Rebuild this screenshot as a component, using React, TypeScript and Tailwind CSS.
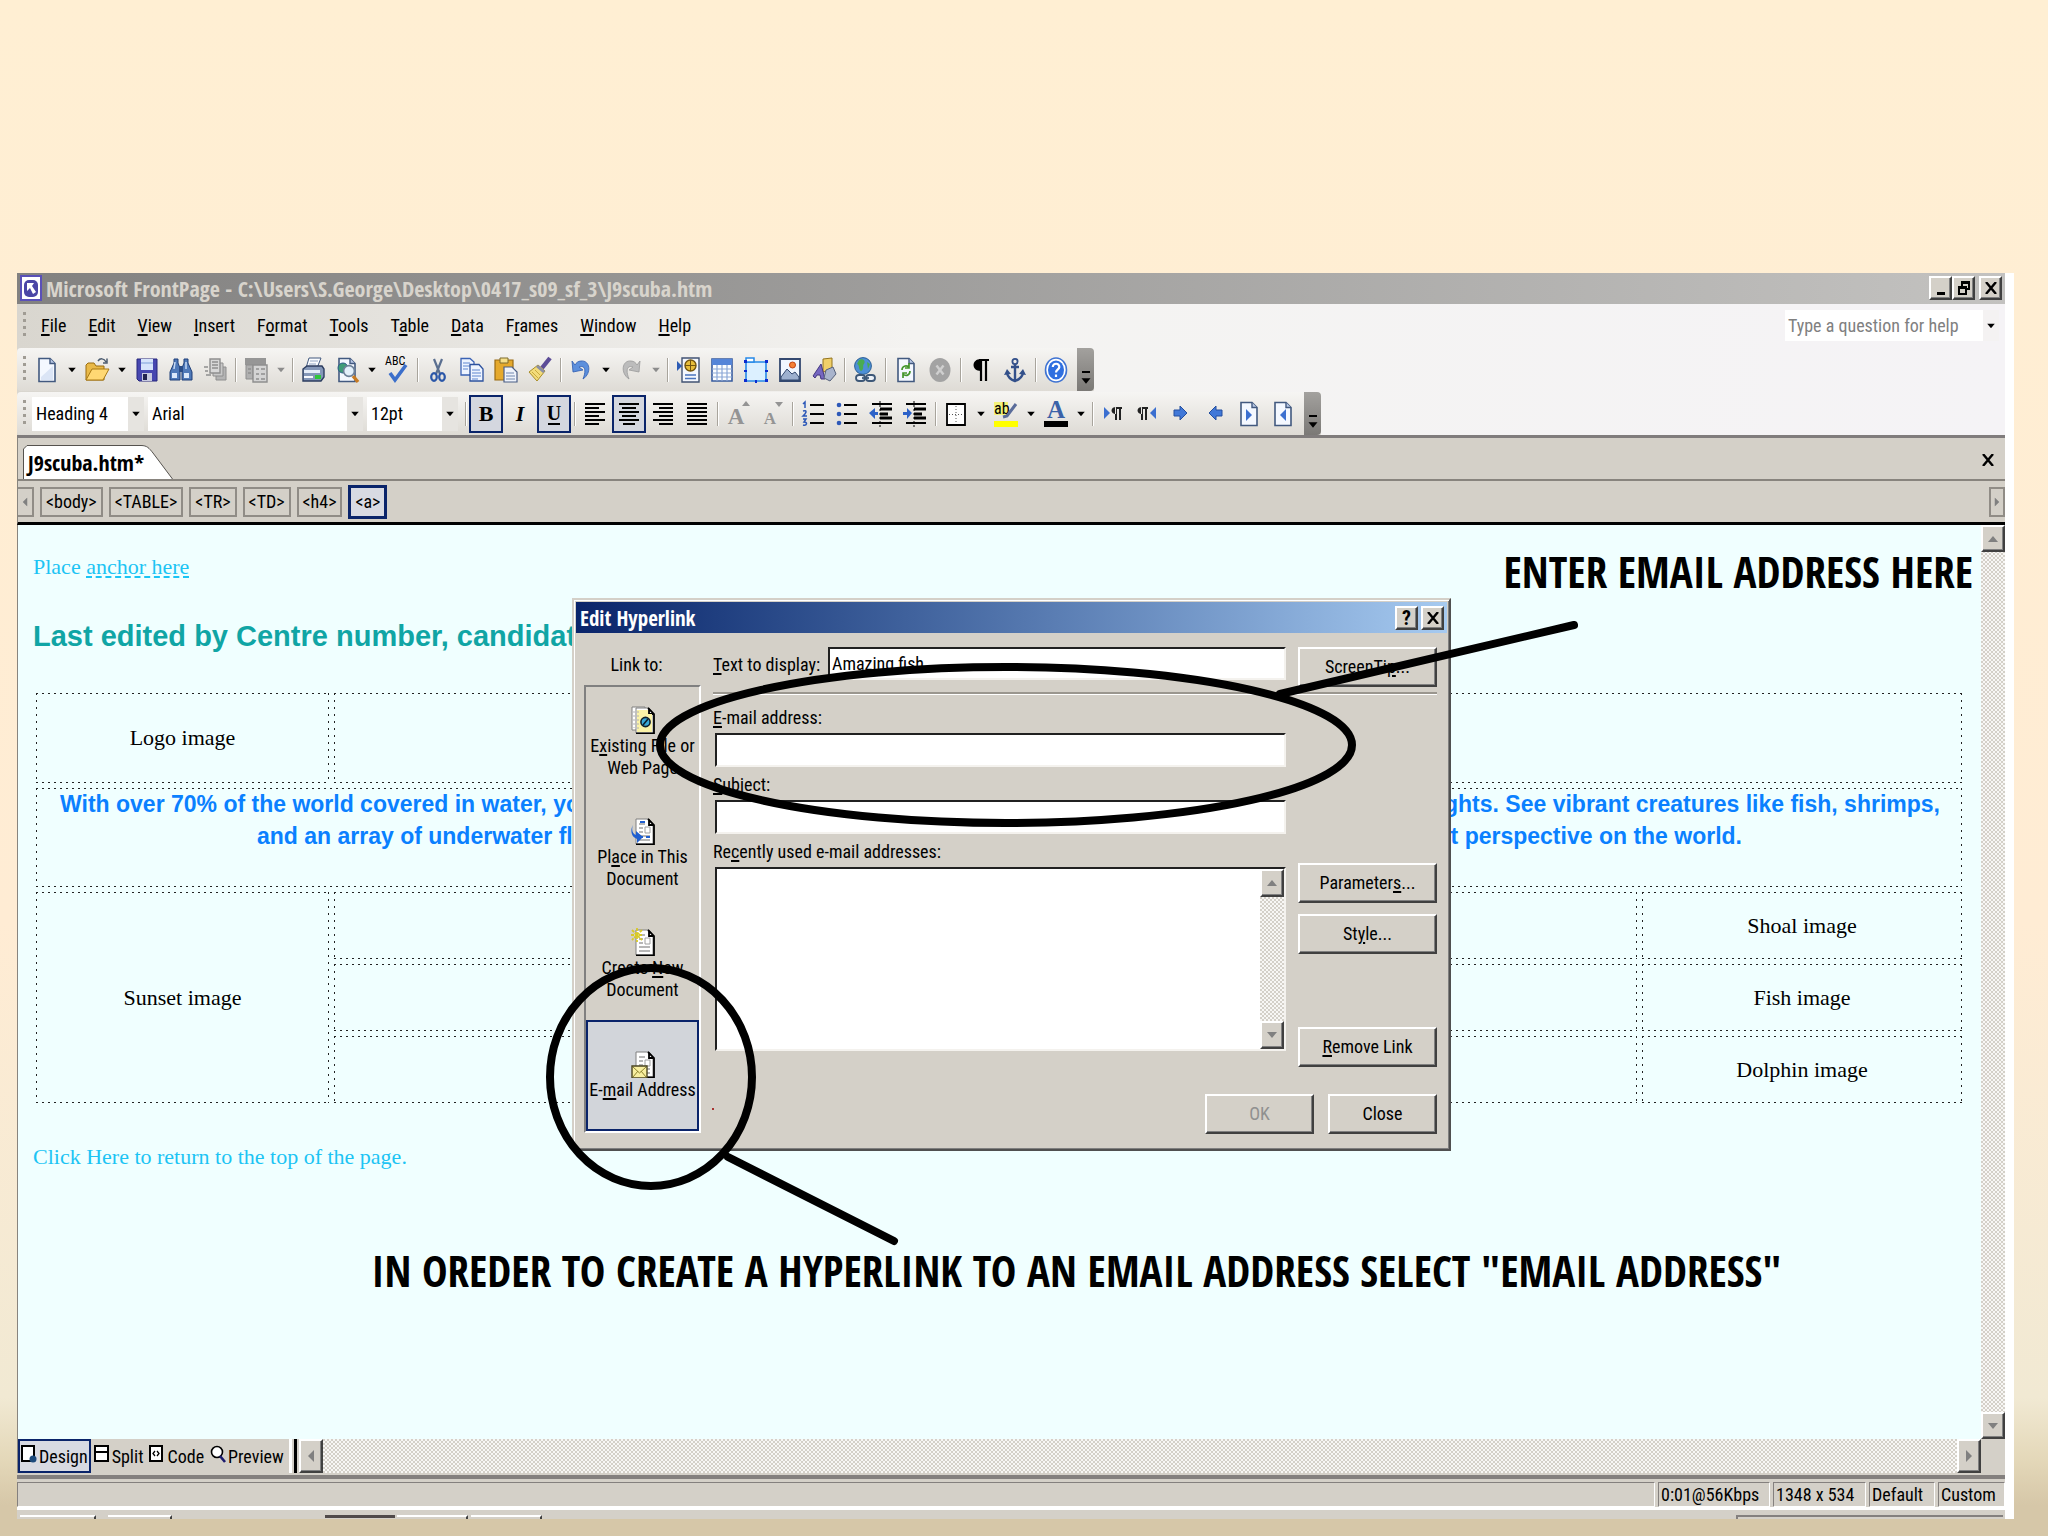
import { useState } from "react";
import type { ReactNode } from "react";

const raised =
  "border-2 border-t-white border-l-white border-r-[#404040] border-b-[#404040] bg-[#d4d0c8] shadow-[inset_-1px_-1px_0_#808080]";
const sunken =
  "border-2 border-t-[#202020] border-l-[#202020] border-r-[#f4f2ee] border-b-[#f4f2ee] bg-white";
const hatch =
  "bg-[repeating-conic-gradient(#f8f7f5_0_25%,#d4d0c8_0_50%)] bg-[length:4px_4px]";
const boldFont = "font-['Open_Sans_Condensed','Open_Sans',sans-serif] font-bold";
const cell =
  "[background:linear-gradient(90deg,#222_2px,transparent_2px)_0_0/6px_1px_repeat-x,linear-gradient(90deg,#222_2px,transparent_2px)_0_100%/6px_1px_repeat-x,linear-gradient(#222_2px,transparent_2px)_0_0/1px_7px_repeat-y,linear-gradient(#222_2px,transparent_2px)_100%_0/1px_7px_repeat-y]";

// "&File" -> underlined F
function Mnemonic({ text }: { text: string }) {
  const i = text.indexOf("&");
  if (i < 0) return <>{text}</>;
  return (
    <>
      {text.slice(0, i)}
      <u className="decoration-2 underline-offset-2">{text[i + 1]}</u>
      {text.slice(i + 2)}
    </>
  );
}

function Glyph({ children }: { children: ReactNode }) {
  return (
    <svg viewBox="0 0 24 26" className="h-[26px] w-6 overflow-visible" aria-hidden="true">
      {children}
    </svg>
  );
}

function Tri({ dir, className = "fill-[#808080]" }: { dir: "up" | "down" | "left" | "right"; className?: string }) {
  const d = {
    up: "M1 9 L6 3 L11 9 Z",
    down: "M1 3 L11 3 L6 9 Z",
    left: "M9 0 L3 6 L9 12 Z",
    right: "M3 0 L9 6 L3 12 Z",
  }[dir];
  return (
    <svg viewBox="0 0 12 12" className={`h-3 w-3 ${className}`} aria-hidden="true">
      <path d={d} />
    </svg>
  );
}

const page = (
  <>
    <path d="M4 1.5H15L20 6.5V24.5H4Z" fill="#f4f8ff" stroke="#42597f" strokeWidth="1.6" />
    <path d="M15 1.5V6.5H20" fill="#b9c9e6" stroke="#42597f" strokeWidth="1.4" />
  </>
);

const icons: Record<string, ReactNode> = {
  "New page": (
    <>
      {page}
      <path d="M6 20L18 9V23H6Z" fill="#dbe5f6" />
    </>
  ),
  Open: (
    <>
      <path d="M1 8V23H19V9H11L9 6H3Z" fill="#e9b948" stroke="#9a6d10" />
      <path d="M1 23L7 12H24L18 23Z" fill="#ffd873" stroke="#a87914" />
      <path d="M13 4C15 1 19 1 21 5M22 1.5V6H18" fill="none" stroke="#4c5c70" strokeWidth="1.5" />
    </>
  ),
  Save: (
    <>
      <path d="M2 2H22V24H4L2 22Z" fill="#4747b0" stroke="#26267c" />
      <path d="M6 2H18V13H6Z" fill="#d6e4fb" />
      <path d="M6 5H18V7H6Z" fill="#a9c2ea" />
      <path d="M7 16H17V24H7Z" fill="#c9cbe0" />
      <path d="M8 17H12V23H8Z" fill="#23234f" />
    </>
  ),
  Find: (
    <>
      <path d="M5 2H9V6L11 11V23H1V15L5 6Z" fill="#4f79b8" stroke="#1f3f78" />
      <path d="M15 2H19V6L23 15V23H13V11L15 6Z" fill="#4f79b8" stroke="#1f3f78" />
      <path d="M10 9H14V15H10Z" fill="#2b4d87" />
      <path d="M3 16H8V21H3ZM15 16H20V21H15Z" fill="#dbe8fa" />
      <path d="M6 5L5 12M17 5L17 12" stroke="#c5d9f5" strokeWidth="1.5" />
    </>
  ),
  Publish: (
    <>
      <path d="M13 10H23V23H13Z" fill="#b4b4b4" stroke="#8e8e8e" />
      <path d="M10 6H20V19H10Z" fill="#c8c8c8" stroke="#8e8e8e" />
      <path d="M7 2H17V16H7Z" fill="#d8d8d8" stroke="#8e8e8e" strokeWidth="1.4" />
      <path d="M9 5H15M9 8H15M9 11H15M1 10H5M2 14H5M3 18H8" stroke="#8e8e8e" strokeWidth="1.4" />
    </>
  ),
  Pane: (
    <>
      <path d="M1 1H22V8H1Z" fill="#969696" />
      <path d="M2 8H9V22H2Z" fill="#b0b0b0" stroke="#8e8e8e" />
      <path d="M9 8H23V25H9Z" fill="#d4d4d4" stroke="#8e8e8e" strokeWidth="1.4" />
      <path d="M12 12H15M17 12H21M12 17H15M17 17H21M12 22H15M17 22H21M4 12H7M4 16H7" stroke="#8e8e8e" strokeWidth="1.5" />
    </>
  ),
  Print: (
    <>
      <path d="M8 1H20L16 11H5Z" fill="#fafcff" stroke="#42597f" />
      <path d="M9 4H17M8 7H15" stroke="#93a6c4" />
      <path d="M2 12L6 9H21L23 12V20L20 24H2Z" fill="#8497b8" stroke="#2c3d5f" strokeWidth="1.4" />
      <path d="M3 13H19V16H3Z" fill="#e6edf8" />
      <path d="M3 19H12V21H3Z" fill="#f7f9fd" />
      <path d="M14 18H20V22H14Z" fill="#2fc63a" />
    </>
  ),
  Preview: (
    <>
      {page}
      <circle cx="8" cy="11" r="5" fill="#3f9c78" stroke="#2a5b86" />
      <circle cx="14" cy="14" r="5.4" fill="#e3f0fb" stroke="#6d8098" strokeWidth="1.6" />
      <path d="M18 19L23 25" stroke="#c77a22" strokeWidth="3.4" />
    </>
  ),
  Spelling: (
    <>
      <text x="0" y="8" fontSize="12" className="font-['Roboto_Condensed',sans-serif]">ABC</text>
      <path d="M5 16L10 23L21 8" fill="none" stroke="#3c6fcb" strokeWidth="3.6" />
    </>
  ),
  Cut: (
    <>
      <path d="M8 2L14 17M16 2L10 17" stroke="#5a6f90" strokeWidth="2.2" />
      <ellipse cx="8" cy="20" rx="2.8" ry="3.8" fill="none" stroke="#2b57a8" strokeWidth="2.2" />
      <ellipse cx="16" cy="20" rx="2.8" ry="3.8" fill="none" stroke="#2b57a8" strokeWidth="2.2" />
    </>
  ),
  Copy: (
    <>
      <path d="M1 1.5H10L14 5V18H1Z" fill="#eef4ff" stroke="#3a62b4" strokeWidth="1.3" />
      <path d="M3 6H10M3 9H10M3 12H8" stroke="#5f86d0" />
      <path d="M10 7.5H19L23 12V24H10Z" fill="#eef4ff" stroke="#2c519e" strokeWidth="1.3" />
      <path d="M12 13H20M12 16H21M12 19H21M12 22H18" stroke="#5f86d0" strokeWidth="1.2" />
    </>
  ),
  Paste: (
    <>
      <path d="M1 3H19V23H1Z" fill="#e5a92c" stroke="#9a6b12" strokeWidth="1.2" />
      <path d="M6 1H14V6H6Z" fill="#f6e08b" stroke="#7c6a2c" />
      <path d="M10 10H18L23 15V25H10Z" fill="#eff3fb" stroke="#4b5e86" strokeWidth="1.2" />
      <path d="M12 16H20M12 19H21M12 22H21" stroke="#7087ae" />
    </>
  ),
  "Format painter": (
    <>
      <path d="M22 1L14 11" stroke="#5c4c97" strokeWidth="4.4" />
      <path d="M10 8L17 14L9 24L1 15Z" fill="#f3dc7b" stroke="#a98d28" />
      <path d="M10 8L17 14L15 16L8 10Z" fill="#8a8fa6" />
      <path d="M4 15L10 21M7 13L12 18" stroke="#c9ab3e" />
    </>
  ),
  Undo: <path d="M3 4L4 15L14 13L10 10C15 8 18 12 14 22C23 16 21 3 12 4C9 4 7 6 6 8Z" fill="#5c8fdc" stroke="#2f5cb0" strokeWidth="0.8" />,
  Redo: <path d="M21 4L20 15L10 13L14 10C9 8 6 12 10 22C1 16 3 3 12 4C15 4 17 6 18 8Z" fill="#bcbcbc" stroke="#9a9a9a" strokeWidth="0.8" />,
  "Web component": (
    <>
      <path d="M1 4L6 9L1 14Z" fill="#2d5cb5" />
      <path d="M6 1H23V25H6Z" fill="#f4f7fd" stroke="#415373" strokeWidth="1.4" />
      <circle cx="14.5" cy="8.5" r="5.5" fill="#e7bd3a" stroke="#73550d" strokeWidth="1.4" />
      <path d="M14.5 3V14M9 8.5H20" stroke="#73550d" />
      <path d="M9 18H20M9 21.5H20" stroke="#4a74bd" strokeWidth="1.6" />
    </>
  ),
  "Insert table": (
    <>
      <path d="M2 2H22V24H2Z" fill="#fdfeff" stroke="#395c9f" strokeWidth="1.6" />
      <path d="M2 2H22V8H2Z" fill="#5585d8" />
      <path d="M2 12H22M2 16H22M2 20H22M7 8V24M12 8V24M17 8V24" stroke="#8ba7d6" strokeWidth="1.2" />
    </>
  ),
  Layer: (
    <>
      <path d="M2 5H22V24H2Z" fill="#dcf0ff" stroke="#2689e8" strokeWidth="1.6" />
      <path d="M2 1H10V5H2Z" fill="#fff" stroke="#2689e8" strokeWidth="1.5" />
      <path d="M0 3H3V6H0ZM21 3H24V6H21ZM0 22H3V25H0ZM21 22H24V25H21ZM11 23H13V26H11ZM0 13H3V15H0ZM21 13H24V15H21Z" fill="#0c2bd0" />
    </>
  ),
  Picture: (
    <>
      <path d="M2 2H22V24H2Z" fill="#f0f6ff" stroke="#33486f" strokeWidth="1.8" />
      <circle cx="14.5" cy="8" r="3" fill="#f58035" stroke="#c04212" />
      <path d="M3 20L9 12L14 17L17 15L21 20V23H3Z" fill="#9db0cf" stroke="#33486f" />
    </>
  ),
  Drawing: (
    <>
      <path d="M11 2L20 1V13L11 15Z" fill="#f0cf69" stroke="#94741c" />
      <path d="M1 19L9 7L13 22H9L8 18H5L3 21Z" fill="#7566c0" stroke="#43377f" />
      <path d="M14 13L21 10L24 17L18 24L12 21Z" fill="#a9b4cc" stroke="#56617b" />
    </>
  ),
  Hyperlink: (
    <>
      <circle cx="10" cy="9" r="8.4" fill="#4d8fd6" stroke="#2c5f94" />
      <path d="M6 3C10 1 13 4 11 7C9 8 12 12 8 14C5 12 7 8 4 7ZM14 5L17 7L15 12Z" fill="#49ab50" />
      <rect x="3" y="18" width="9" height="6" rx="3" fill="#eef2f8" stroke="#3e5878" strokeWidth="1.8" />
      <rect x="13" y="18" width="9" height="6" rx="3" fill="#eef2f8" stroke="#3e5878" strokeWidth="1.8" />
      <path d="M9 21H16" stroke="#3e5878" strokeWidth="1.8" />
    </>
  ),
  Refresh: (
    <>
      {page}
      <path d="M8 13C8 9 12 8 15 10M15 6V11H11M16 14C16 18 12 20 9 17M9 21V16H13" fill="none" stroke="#44962d" strokeWidth="1.7" />
    </>
  ),
  Stop: (
    <>
      <ellipse cx="12" cy="13" rx="10.5" ry="12" fill="#a3a3a3" />
      <path d="M8.5 8.5L15.5 17.5M15.5 8.5L8.5 17.5" stroke="#cfcfcf" strokeWidth="2.4" />
    </>
  ),
  "Show all": (
    <>
      <path d="M12 2C2 2 2 14 12 14Z" />
      <path d="M12 2V24M17 2V24M10 3H20" stroke="#000" strokeWidth="2.2" />
    </>
  ),
  Bookmark: (
    <>
      <circle cx="12" cy="4.5" r="2.6" fill="none" stroke="#33508a" strokeWidth="1.8" />
      <path d="M12 7V23M8 10H16M4 16C5 21 9 23 12 24C15 23 19 21 20 16" fill="none" stroke="#33508a" strokeWidth="2.4" />
      <path d="M1 18L4 12L8 17ZM23 18L20 12L16 17Z" fill="#33508a" />
    </>
  ),
  Help: (
    <>
      <ellipse cx="12" cy="13" rx="10.5" ry="12" fill="#fff" stroke="#3f73d2" strokeWidth="1.6" />
      <ellipse cx="12" cy="13" rx="8" ry="9.5" fill="#2f6fe0" />
      <path d="M8.8 10C8.8 5.500 15.5 5.800 15.3 10C15 12.6 12 12.8 12 15.5M12 17.5V20" fill="none" stroke="#fff" strokeWidth="2.2" />
    </>
  ),
  Bold: <text x="12" y="20" textAnchor="middle" fontSize="22" className="font-['Liberation_Serif',serif] font-bold">B</text>,
  Italic: <text x="12" y="20" textAnchor="middle" fontSize="22" className="font-['Liberation_Serif',serif] font-bold italic">I</text>,
  Underline: (
    <>
      <text x="12" y="19" textAnchor="middle" fontSize="20" className="font-['Liberation_Serif',serif] font-bold">U</text>
      <path d="M6 23H18" stroke="#000" strokeWidth="2" />
    </>
  ),
  "Align left": <path d="M2 3H22M2 7H16M2 11H22M2 15H16M2 19H22M2 23H16" stroke="#000" strokeWidth="2" />,
  Center: <path d="M2 3H22M5 7H19M2 11H22M5 15H19M2 19H22M6 23H18" stroke="#000" strokeWidth="2" />,
  "Align right": <path d="M2 3H22M8 7H22M2 11H22M8 15H22M2 19H22M8 23H22" stroke="#000" strokeWidth="2" />,
  Justify: <path d="M2 3H22M2 7H22M2 11H22M2 15H22M2 19H22M2 23H22" stroke="#000" strokeWidth="2" />,
  "Grow font": (
    <>
      <text x="10" y="23" textAnchor="middle" fontSize="23" fill="#949494" className="font-['Liberation_Serif',serif] font-bold">A</text>
      <path d="M16 5L20 0L24 5Z" fill="#949494" />
    </>
  ),
  "Shrink font": (
    <>
      <text x="10" y="23" textAnchor="middle" fontSize="17" fill="#949494" className="font-['Liberation_Serif',serif] font-bold">A</text>
      <path d="M15 1H23L19 6Z" fill="#949494" />
    </>
  ),
  Numbering: (
    <>
      <path d="M9 4H23M9 13H23M9 22H23" stroke="#000" strokeWidth="1.8" />
      <path d="M2 3L4 1V7M2 10C6 9 6 11 2 15H6M2 18H5L3 21C7 21 6 25 2 24" fill="none" stroke="#2d58b8" strokeWidth="1.5" />
    </>
  ),
  Bullets: (
    <>
      <path d="M9 4H22M9 13H22M9 22H22" stroke="#000" strokeWidth="1.8" />
      <circle cx="4" cy="4" r="2.3" fill="#2d58b8" />
      <circle cx="4" cy="13" r="2.3" fill="#2d58b8" />
      <circle cx="4" cy="22" r="2.3" fill="#2d58b8" />
    </>
  ),
  Outdent: (
    <>
      <path d="M3 3H23M3 22H23" stroke="#000" strokeWidth="1.8" />
      <path d="M11 8H23M11 13H19M11 17H23" stroke="#000" strokeWidth="3" />
      <path d="M11 0V26" stroke="#000" strokeDasharray="2 2" />
      <path d="M0 12L6 7V11H9V14H6V18Z" fill="#2d62c8" />
    </>
  ),
  Indent: (
    <>
      <path d="M3 3H23M3 22H23" stroke="#000" strokeWidth="1.8" />
      <path d="M11 8H23M11 13H19M11 17H23" stroke="#000" strokeWidth="3" />
      <path d="M11 0V26" stroke="#000" strokeDasharray="2 2" />
      <path d="M9 12L4 7V11H0V14H4V18Z" fill="#2d62c8" />
    </>
  ),
  Borders: (
    <>
      <path d="M3 3H21V24H3Z" fill="#fff" stroke="#000" strokeWidth="1.8" />
      <path d="M12 5V23M5 13.5H20" stroke="#555" strokeDasharray="1 2" />
    </>
  ),
  Highlight: (
    <>
      <path d="M0 1H14V14H0Z" fill="#f4f27a" />
      <text x="0" y="13" fontSize="16" className="font-['Roboto_Condensed',sans-serif]">ab</text>
      <path d="M22 3L13 15L9 16" fill="none" stroke="#5a6c9a" strokeWidth="3" />
      <path d="M0 20H24V26H0Z" fill="#ff0" />
    </>
  ),
  "Font color": (
    <>
      <text x="12" y="17" textAnchor="middle" fontSize="25" fill="#3b62a8" className="font-['Liberation_Serif',serif] font-bold">A</text>
      <path d="M0 20H24V26H0Z" />
    </>
  ),
  "Left to right": (
    <>
      <path d="M3 6L9 12L3 18Z" fill="#3b6fd0" />
      <path d="M15 6C9 6 9 13 15 13ZM14 6H21V8H20V19H18V8H16V19H14Z" fill="#222" />
    </>
  ),
  "Right to left": (
    <>
      <path d="M21 6L15 12L21 18Z" fill="#3b6fd0" />
      <path d="M7 6C1 6 1 13 7 13ZM6 6H13V8H12V19H10V8H8V19H6Z" fill="#222" />
    </>
  ),
  Forward: <path d="M5 9H11V5L18 12L11 19V15H5Z" fill="#4178d8" stroke="#244f9f" />,
  Back: <path d="M19 9H13V5L6 12L13 19V15H19Z" fill="#4178d8" stroke="#244f9f" />,
  "Next page": (
    <>
      {page}
      <path d="M9 8L15 14L9 20Z" fill="#3b6fd0" />
    </>
  ),
  "Previous page": (
    <>
      {page}
      <path d="M15 8L9 14L15 20Z" fill="#3b6fd0" />
    </>
  ),
};

// "|" is a separator, "v" a drop-down arrow, "-" a disabled arrow
const standardBar = [
  "New page", "v", "Open", "v", "Save", "Find", "Publish", "|", "Pane", "-", "|", "Print", "Preview", "v",
  "Spelling", "|", "Cut", "Copy", "Paste", "Format painter", "|", "Undo", "v", "Redo", "-", "|",
  "Web component", "Insert table", "Layer", "Picture", "Drawing", "|", "Hyperlink", "|", "Refresh", "Stop",
  "|", "Show all", "Bookmark", "|", "Help",
];

const formatBar = [
  "|", "Bold", "Italic", "Underline", "|", "Align left", "Center", "Align right", "Justify", "|",
  "Grow font", "Shrink font", "|", "Numbering", "Bullets", "Outdent", "Indent", "|", "Borders", "v",
  "Highlight", "v", "Font color", "v", "|", "Left to right", "Right to left", "Forward", "Back",
  "Next page", "Previous page",
];

const pressed = ["Bold", "Underline", "Center"];

function Tools({ items }: { items: string[] }) {
  return (
    <>
      {items.map((name, i) => {
        if (name === "|") {
          return <span key={i} className="mr-[2px] ml-[3px] h-6 w-[2px] border-l border-r border-l-[#a8a49c] border-r-white" />;
        }
        if (name === "v" || name === "-") {
          return (
            <button key={i} aria-label="More options" className="flex w-4 justify-center">
              <Tri dir="down" className={name === "v" ? "fill-black scale-75" : "fill-[#8c8c8c] scale-75"} />
            </button>
          );
        }
        return (
          <button
            key={i}
            aria-label={name}
            className={`flex h-[38px] w-[34px] items-center justify-center ${
              pressed.includes(name) ? "border-2 border-[#0a246a] bg-[#d4d7df]" : ""
            }`}
          >
            <Glyph>{icons[name]}</Glyph>
          </button>
        );
      })}
    </>
  );
}

function Grip() {
  return <span className="mx-1 h-7 w-[3px] bg-[linear-gradient(#a09c94_3px,transparent_3px)] bg-[length:3px_7px]" />;
}

function Overflow() {
  return (
    <button aria-label="Toolbar options" className="ml-1 flex w-[17px] flex-col items-center justify-end gap-[2px] self-stretch rounded-r bg-gradient-to-b from-[#a3a19e] to-[#7b7976] pb-1">
      <span className="h-[2px] w-2 bg-black" />
      <Tri dir="down" className="fill-black scale-90" />
    </button>
  );
}

function Combo({ label, value, className }: { label: string; value: string; className: string }) {
  return (
    <span className={`relative mr-1 flex h-[34px] items-center bg-white ${className}`}>
      <select aria-label={label} className="h-full w-full appearance-none bg-transparent pl-1 outline-none">
        <option>{value}</option>
      </select>
      <span className="pointer-events-none absolute inset-y-0 right-0 flex w-4 items-center justify-center bg-[#e6e4e0]">
        <Tri dir="down" className="fill-black scale-75" />
      </span>
    </span>
  );
}

function Docs({ kind }: { kind: string }) {
  return (
    <svg viewBox="0 0 24 28" className="h-7 w-6" aria-hidden="true">
      {kind === "file" && <path d="M1 1H14V24H1Z" fill="#fff" stroke="#808080" />}
      <path d="M5 2H18L22 7V27H5Z" fill="#fff" stroke="#808080" />
      <path d="M17 2L23 8V27.5H5M18 3V8H22" fill="none" stroke="#000" strokeWidth="1.8" />
      {kind === "file" ? (
        <>
          <path d="M6 4H17V8H21V26H6Z" fill="#fbf3a8" />
          <path d="M3 5V22M7 5V25" stroke="#b0b0b0" strokeDasharray="2 2" />
          <circle cx="14.5" cy="16" r="4.6" fill="#39a9d8" stroke="#10202c" strokeWidth="1.6" />
          <path d="M12 19L17 13" stroke="#10202c" strokeWidth="1.6" />
        </>
      ) : (
        <>
          <path d="M8 7H14M8 11H12M8 15H12M8 19H19M8 23H19" stroke="#a0a0a0" strokeWidth="1.4" />
          <path d="M14 10H19V16H14Z" fill="#fff" stroke="#a0a0a0" />
        </>
      )}
      {kind === "place" && (
        <>
          <path d="M9 5H14M8 20H12M15 20H19" stroke="#1f5fd0" strokeWidth="2" />
          <path d="M2 8C0 13 2 17 5 18V14L12 20L6 26V22C0 20 -1 13 2 8Z" fill="#1f5fd0" />
        </>
      )}
      {kind === "new" && <path d="M6 0V14M0 7H12M1 2L11 12M11 2L1 12" stroke="#d8c928" strokeWidth="1.8" strokeDasharray="3 1" />}
      {kind === "mail" && (
        <>
          <path d="M1 16H16V28H1Z" fill="#f8efa0" stroke="#4a4420" strokeWidth="1.4" />
          <path d="M2 17L8.500 23L15 17M2 27L7 21M15 27L10 21" fill="none" stroke="#8f8430" />
        </>
      )}
    </svg>
  );
}

const linkTargets = [
  { kind: "file", lines: ["E&xisting File or", "Web Page"] },
  { kind: "place", lines: ["Pl&ace in This", "Document"] },
  { kind: "new", lines: ["Create &New", "Document"] },
  { kind: "mail", lines: ["E-&mail Address"] },
];

function DialogButton({ text, className, disabled }: { text: string; className: string; disabled?: boolean }) {
  return (
    <button disabled={disabled} className={`h-10 shrink-0 ${raised} ${className}`}>
      <Mnemonic text={text} />
    </button>
  );
}

function HyperlinkDialog() {
  const [target, setTarget] = useState("mail");
  const [display, setDisplay] = useState("Amazing fish");
  const field = `mt-1 mb-[7px] ml-[2px] block h-[34px] w-[calc(100%-2px)] px-1 ${sunken}`;

  return (
    <section
      role="dialog"
      aria-label="Edit Hyperlink"
      className="absolute inset-x-0 top-[73px] mx-auto w-[879px] border-2 border-t-[#d4d0c8] border-l-[#d4d0c8] border-r-[#505050] border-b-[#505050] bg-[#d4d0c8] shadow-[inset_1px_1px_0_#fff,inset_-1px_-1px_0_#808080]"
    >
      <header className="m-[2px] flex h-[31px] items-center bg-gradient-to-r from-[#0a246a] to-[#a6caf0] pl-1 pr-[3px]">
        <h2 className={`flex-1 text-[21px] leading-6 text-white ${boldFont}`}>Edit Hyperlink</h2>
        <button aria-label="Help" className={`flex h-6 w-[23px] items-center justify-center ${raised}`}>
          <span className="text-[20px] font-bold leading-5">?</span>
        </button>
        <button aria-label="Close dialog" className={`ml-[3px] flex h-6 w-[23px] items-center justify-center ${raised}`}>
          <Cross />
        </button>
      </header>

      <div className="flex gap-3 pt-3 pr-3 pb-[15px] pl-[10px]">
        <div className="w-[117px]">
          <p className="mb-[2px] h-9 pr-3 text-center leading-9">Link to:</p>
          <div className="border-2 border-t-[#808080] border-l-[#808080] border-r-white border-b-white">
            {linkTargets.map((t) => (
              <button
                key={t.kind}
                onClick={() => setTarget(t.kind)}
                className={`flex h-[111px] w-full flex-col items-center justify-center gap-[1px] whitespace-nowrap leading-[22px] ${
                  target === t.kind ? "border-2 border-[#0a246a] bg-[#d2d5da]" : ""
                }`}
              >
                <Docs kind={t.kind} />
                <span>
                  {t.lines.map((l) => (
                    <span key={l} className="block">
                      <Mnemonic text={l} />
                    </span>
                  ))}
                </span>
              </button>
            ))}
          </div>
        </div>

        <div className="flex-1 leading-[22px]">
          <div className="flex items-start gap-3">
            <label htmlFor="display" className="w-[103px] shrink-0 whitespace-nowrap pt-[7px]">
              <Mnemonic text="&Text to display:" />
            </label>
            <input id="display" value={display} onChange={(e) => setDisplay(e.target.value)} className={`h-[33px] min-w-0 flex-1 px-[2px] ${sunken}`} />
            <DialogButton text="ScreenTi&p..." className="w-[139px]" />
          </div>
          <hr className="mt-[5px] border-t-2 border-b border-t-[#9a968e] border-b-white" />
          <div className="flex gap-3">
            <div className="flex-1 pt-3">
              <label htmlFor="email" className="block">
                <Mnemonic text="&E-mail address:" />
              </label>
              <input id="email" className={field} />
              <label htmlFor="subject" className="block">
                <Mnemonic text="&Subject:" />
              </label>
              <input id="subject" className={field} />
              <p>
                <Mnemonic text="Re&cently used e-mail addresses:" />
              </p>
              <div className={`mt-1 ml-[2px] flex h-[184px] justify-end ${sunken}`}>
                <div className={`flex w-6 flex-col justify-between ${hatch}`}>
                  <button aria-label="Scroll up" className={`flex h-7 items-center justify-center ${raised}`}><Tri dir="up" /></button>
                  <button aria-label="Scroll down" className={`flex h-7 items-center justify-center ${raised}`}><Tri dir="down" /></button>
                </div>
              </div>
            </div>
            <div className="flex w-[139px] flex-col pt-[168px]">
              <DialogButton text="Parameter&s..." className="mb-[11px]" />
              <DialogButton text="St&yle..." className="mb-[73px]" />
              <DialogButton text="&Remove Link" className="" />
            </div>
          </div>
          <div className="mt-[27px] flex justify-end gap-[14px]">
            <DialogButton text="OK" className="w-[109px] text-[#909090]" disabled />
            <DialogButton text="Close" className="w-[109px]" />
          </div>
        </div>
      </div>

      <svg viewBox="0 0 876 549" className="pointer-events-none absolute top-0 left-0 h-[549px] w-[876px] overflow-visible" aria-hidden="true">
        <g fill="none" stroke="#000" strokeWidth="8" strokeLinecap="round">
          <ellipse cx="432" cy="145" rx="346" ry="78" />
          <ellipse cx="77" cy="477" rx="101" ry="109" />
          <path d="M706 94L1000 25M154 557L320 641" />
        </g>
        <circle cx="139" cy="509" r="1" fill="#900" />
      </svg>
    </section>
  );
}

function Cross() {
  return (
    <svg viewBox="0 0 12 12" className="h-3 w-3" aria-hidden="true">
      <path d="M1 0L11 12M11 0L1 12" stroke="#000" strokeWidth="2.4" />
    </svg>
  );
}

const menus = ["&File", "&Edit", "&View", "&Insert", "F&ormat", "&Tools", "T&able", "&Data", "F&rames", "&Window", "&Help"];
const tags = ["<body>", "<TABLE>", "<TR>", "<TD>", "<h4>", "<a>"];
const views = [
  { name: "Design", icon: <><path d="M1 1H13V16H1Z" fill="#fff" stroke="#000" strokeWidth="2" /><circle cx="12" cy="14" r="3.500" fill="#1c4a7c" /></> },
  { name: "Split", icon: <><path d="M1 1H14V16H1Z" fill="#fff" stroke="#000" strokeWidth="2" /><path d="M1 7H14" stroke="#000" strokeWidth="2" /></> },
  { name: "Code", icon: <><path d="M1 1H13V16H1Z" fill="#fff" stroke="#000" strokeWidth="2" /><path d="M6 6L4 8.500L6 11M8 6L10 8.500L8 11" fill="none" stroke="#000" strokeWidth="1.3" /></> },
  { name: "Preview", icon: <><circle cx="7" cy="7" r="5.500" fill="#fff" stroke="#000" strokeWidth="1.6" /><path d="M10 11L15 17" stroke="#1a1a6e" strokeWidth="2.600" /></> },
];

const statusCell = "border border-t-[#84807e] border-l-[#84807e] border-r-white border-b-white";

export default function App() {
  const [view, setView] = useState("Design");

  return (
    <main className="flex min-h-screen flex-col bg-[linear-gradient(#ffefd3_0%,#ffecd4_60%,#f1e9d3_91%,#e4d8b9_95%,#d6c7a8_98%)] pt-[273px] pr-[34px] pb-[17px] pl-[17px] font-['Roboto_Condensed','Liberation_Sans',sans-serif] text-[18px] text-black">
      <div className="flex flex-1 flex-col border-r-[9px] border-white bg-[#d4d0c8]">
        <header className="flex h-[31px] items-center bg-gradient-to-r from-[#828180] to-[#c3c2c0] pr-[3px] pb-[2px] pl-[3px]">
          <svg viewBox="0 0 22 26" className="mr-1 h-[26px] w-[22px]" aria-hidden="true">
            <path d="M1 1H21V25H1Z" fill="#fff" stroke="#5a50b8" strokeWidth="2" />
            <rect x="4" y="5" width="14" height="17" rx="5" fill="#4b46a6" />
            <path d="M7 8H14L12 11L16 17L13 19L10 13L7 16Z" fill="#fff" />
          </svg>
          <h1 className={`flex-1 text-[22px] leading-7 text-[#d8d4cc] ${boldFont}`}>
            Microsoft FrontPage - C:\Users\S.George\Desktop\0417_s09_sf_3\J9scuba.htm
          </h1>
          <button aria-label="Minimize" className={`flex h-6 w-[23px] items-end justify-center pb-[3px] ${raised}`}>
            <span className="h-[3px] w-2 bg-black" />
          </button>
          <button aria-label="Restore" className={`flex h-6 w-[23px] items-center justify-center ${raised}`}>
            <svg viewBox="0 0 14 16" className="h-4 w-[14px]" aria-hidden="true">
              <path d="M5 6V2H12V9H9M5 3H12M2 7H9V14H2ZM2 8H9" fill="none" stroke="#000" strokeWidth="2" />
            </svg>
          </button>
          <button aria-label="Close" className={`ml-1 flex h-6 w-[23px] items-center justify-center ${raised}`}>
            <Cross />
          </button>
        </header>

        <div className="border-b-[3px] border-[#807c7c] bg-[linear-gradient(90deg,#d9d6cf_0%,#f4f3f1_45%,#f5f3f6_100%)]">
          <nav className="flex h-11 items-center pr-[6px] pb-[1px] pl-[2px]">
            <Grip />
            {menus.map((m) => (
              <button key={m} className="px-[11px] leading-6">
                <Mnemonic text={m} />
              </button>
            ))}
            <span className="relative ml-auto flex h-[31px] w-[214px] items-center bg-white">
              <input aria-label="Type a question for help" placeholder="Type a question for help" className="h-full w-full bg-transparent px-[3px] outline-none placeholder:text-[#808080]" />
              <span className="absolute inset-y-0 right-0 flex w-4 items-center justify-center bg-[#f4f2f2]">
                <Tri dir="down" className="fill-black scale-75" />
              </span>
            </span>
          </nav>
          <div className="flex">
            <div className="flex h-[43px] items-center rounded-l bg-gradient-to-b from-[#f6f5f3] to-[#dedbd5] pl-[2px]">
              <Grip />
              <Tools items={standardBar} />
              <Overflow />
            </div>
          </div>
          <div className="mt-[1px] flex">
            <div className="flex h-[43px] items-center rounded-l bg-gradient-to-b from-[#f6f5f3] to-[#dedbd5] pl-[2px]">
              <Grip />
              <span className="ml-[2px] flex">
                <Combo label="Style" value="Heading 4" className="w-28" />
                <Combo label="Font" value="Arial" className="w-[215px]" />
                <Combo label="Font size" value="12pt" className="w-[91px]" />
              </span>
              <Tools items={formatBar} />
              <Overflow />
            </div>
          </div>
        </div>

        <div className="relative flex h-[43px] items-end border-b-2 border-l border-[#88847e] pl-[5px]">
          <div className="relative h-[34px] w-[152px]">
            <svg viewBox="0 0 152 34" className="absolute inset-0 h-full w-full" aria-hidden="true">
              <path d="M0.500 36V4L4 0.500H118C124 0.500 126 3 130 8L151 36" fill="#fff" stroke="#55524e" />
            </svg>
            <button className={`relative pl-[5px] text-[22px] leading-[34px] ${boldFont}`}>J9scuba.htm*</button>
          </div>
          <button aria-label="Close page" className="mr-[7px] mb-[9px] ml-auto p-1">
            <Cross />
          </button>
        </div>

        <div className="flex h-11 items-center gap-[6px] border-b-[3px] border-l border-b-black border-l-[#88847e]">
          <button aria-label="Scroll tags left" className="flex h-[30px] w-4 items-center justify-center border-2 border-l-0 border-[#908c86]">
            <Tri dir="left" className="fill-[#808080] scale-75" />
          </button>
          {tags.map((t) => (
            <button
              key={t}
              className={`whitespace-nowrap px-1 leading-[26px] ${
                t === "<a>" ? "border-[3px] border-[#0a246a] bg-[#d8dae2] py-[1px]" : "border-2 border-[#908c86]"
              }`}
            >
              {t}
            </button>
          ))}
          <button aria-label="Scroll tags right" className="ml-auto flex h-[30px] w-4 items-center justify-center border-2 border-[#908c86]">
            <Tri dir="right" className="fill-[#808080] scale-75" />
          </button>
        </div>

        <div className="relative flex flex-1 border-l border-[#88847e] bg-[#f0ffff]">
          <article className="relative flex-1 pr-[14px] pl-[13px] font-['Liberation_Serif',serif] text-[22px] leading-[26px]">
            <p className="mt-[29px] pl-[2px] text-[#1cc4f4]">
              Place <a href="#top" className="underline decoration-dashed decoration-2 underline-offset-2">anchor here</a>
            </p>
            <h2 className="mt-10 h-8 overflow-hidden pl-[2px] font-['Liberation_Sans',sans-serif] text-[29px] font-bold leading-8 text-[#10a5a5]">
              Last edited by Centre number, candidate
            </h2>
            <table className="mt-9 w-full table-fixed border-separate border-spacing-[5px] text-center">
              <colgroup>
                <col className="w-[293px]" />
                <col />
                <col className="w-[320px]" />
              </colgroup>
              <tbody>
                <tr className="h-[90px]">
                  <td className={cell}>Logo image</td>
                  <td colSpan={2} className={cell} />
                </tr>
                <tr className="h-[99px]">
                  <td colSpan={3} className={`align-top font-['Liberation_Sans',sans-serif] text-[23px] font-bold leading-8 text-[#0a80ff] ${cell}`}>
                    <p className="flex justify-between pr-[22px] pl-6">
                      <span>With over 70% of the world covered in water, you</span>
                      <span>sights. See vibrant creatures like fish, shrimps,</span>
                    </p>
                    <p className="flex justify-between pr-[220px] pl-[221px]">
                      <span>and an array of underwater flora</span>
                      <span>different perspective on the world.</span>
                    </p>
                  </td>
                </tr>
                <tr className="h-[67px]">
                  <td rowSpan={3} className={cell}>Sunset image</td>
                  <td className={cell} />
                  <td className={cell}>Shoal image</td>
                </tr>
                <tr className="h-[67px]">
                  <td className={cell} />
                  <td className={cell}>Fish image</td>
                </tr>
                <tr className="h-[67px]">
                  <td className={cell} />
                  <td className={cell}>Dolphin image</td>
                </tr>
              </tbody>
            </table>
            <p className="mt-9 pl-[2px]">
              <a href="#top" className="text-[#1cc4f4]">Click Here to return to the top of the page.</a>
            </p>

            <p className={`absolute top-[24px] right-2 text-[43px] leading-[46px] ${boldFont}`}>ENTER EMAIL ADDRESS HERE</p>
            <p className={`absolute inset-x-0 top-[723px] pl-[154px] text-center text-[43px] leading-[46px] ${boldFont}`}>
              IN OREDER TO CREATE A HYPERLINK TO AN EMAIL ADDRESS SELECT "EMAIL ADDRESS"
            </p>
          </article>
          <div className={`flex w-6 flex-col justify-between ${hatch}`}>
            <button aria-label="Page up" className={`flex h-[27px] items-center justify-center ${raised}`}><Tri dir="up" /></button>
            <button aria-label="Page down" className={`flex h-[27px] items-center justify-center ${raised}`}><Tri dir="down" /></button>
          </div>
          <HyperlinkDialog />
        </div>

        <div className="flex h-[34px] border-l border-[#88847e]">
          {views.map((v) => (
            <button
              key={v.name}
              onClick={() => setView(v.name)}
              className={`flex items-center gap-[2px] border-2 px-[1px] ${
                view === v.name ? "border-[#0a246a] bg-[#d8dae2]" : "border-transparent"
              }`}
            >
              <svg viewBox="0 0 16 18" className="mb-1 h-[18px] w-4" aria-hidden="true">{v.icon}</svg>
              {v.name}
            </button>
          ))}
          <span className="ml-[2px] w-[3px] bg-white" />
          <span className="mr-[2px] ml-[2px] w-[3px] bg-black" />
          <div className={`flex flex-1 justify-between ${hatch}`}>
            <button aria-label="Page left" className={`flex w-6 items-center justify-center ${raised}`}><Tri dir="left" /></button>
            <button aria-label="Page right" className={`flex w-6 items-center justify-center ${raised}`}><Tri dir="right" /></button>
          </div>
          <span className="w-6" />
        </div>

        <footer className="mt-[2px] border-t-4 border-[#84807e]">
          <div className="flex h-[30px] gap-[3px] border-b-2 border-white pt-[3px] leading-6">
            <span className={`flex-1 ${statusCell}`} />
            <span className={`w-28 pl-[2px] ${statusCell}`}>0:01@56Kbps</span>
            <span className={`w-[93px] pl-[2px] ${statusCell}`}>1348 x 534</span>
            <span className={`w-[66px] pl-[2px] ${statusCell}`}>Default</span>
            <span className={`w-[67px] pl-[2px] ${statusCell}`}>Custom</span>
          </div>
          <div className="flex h-[10px] items-end border-t border-white pl-[3px]">
            <span className="mr-3 h-1 w-[76px] border-t-2 border-r-2 border-t-white border-r-[#404040]" />
            <span className="mr-[153px] h-1 w-16 border-t-2 border-r-2 border-t-white border-r-[#404040]" />
            <span className="mr-[2px] h-1 w-[70px] border-t-[3px] border-[#504a4a]" />
            <span className="mr-[3px] h-1 w-[71px] border-t-2 border-r-2 border-t-white border-r-[#404040]" />
            <span className="h-1 w-[71px] border-t-2 border-r-2 border-t-white border-r-[#404040]" />
            <span className="mr-[2px] ml-auto h-1 w-[267px] border-t-2 border-l-2 border-[#84807e]" />
          </div>
        </footer>
      </div>
    </main>
  );
}
